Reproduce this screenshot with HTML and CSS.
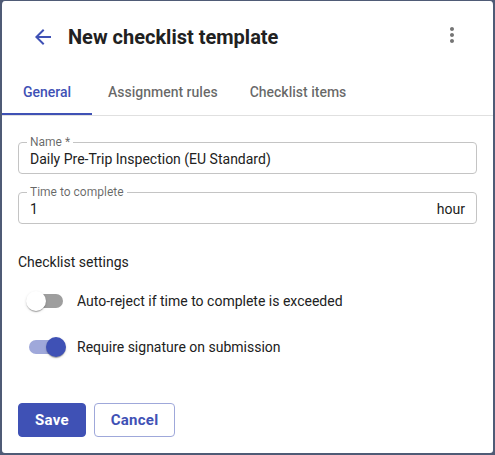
FILE: index.html
```html
<!DOCTYPE html>
<html lang="en">
<head>
<meta charset="utf-8">
<title>New checklist template</title>
<link rel="stylesheet" href="styles.css">
</head>
<body>
<div class="card">
  <header class="header">
    <svg class="icon back" viewBox="0 0 24 24" width="24" height="24"><path d="M20 11H7.83l5.59-5.59L12 4l-8 8 8 8 1.41-1.41L7.83 13H20v-2z"/></svg>
    <h1 class="title">New checklist template</h1>
    <svg class="icon more" viewBox="0 0 24 24" width="24" height="24"><path d="M12 8c1.1 0 2-.9 2-2s-.9-2-2-2-2 .9-2 2 .9 2 2 2zm0 2c-1.1 0-2 .9-2 2s.9 2 2 2 2-.9 2-2-.9-2-2-2zm0 6c-1.1 0-2 .9-2 2s.9 2 2 2 2-.9 2-2-.9-2-2-2z"/></svg>
  </header>
  <nav class="tabs">
    <div class="tab active">General</div>
    <div class="tab">Assignment rules</div>
    <div class="tab">Checklist items</div>
  </nav>
  <form class="form">
    <fieldset class="field">
      <legend class="field-label">Name *</legend>
      <div class="field-value">Daily Pre-Trip Inspection (EU Standard)</div>
    </fieldset>
    <fieldset class="field">
      <legend class="field-label">Time to complete</legend>
      <div class="field-value split"><span>1</span><span>hour</span></div>
    </fieldset>
    <div class="section-title">Checklist settings</div>
    <div class="switch-row">
      <span class="switch"><span class="track"></span><span class="thumb"></span></span>
      <span class="switch-label">Auto-reject if time to complete is exceeded</span>
    </div>
    <div class="switch-row">
      <span class="switch on"><span class="track"></span><span class="thumb"></span></span>
      <span class="switch-label">Require signature on submission</span>
    </div>
  </form>
  <div class="actions">
    <button class="btn primary" type="button">Save</button>
    <button class="btn outlined" type="button">Cancel</button>
  </div>
</div>
</body>
</html>
```

FILE: styles.css
```css
* { box-sizing: border-box; }
html, body { margin: 0; padding: 0; background: #4f5b76; }
body { font-family: Roboto, "Noto Sans", "Liberation Sans", sans-serif; color: #212121; }

.card {
  width: 495px;
  height: 455px;
  background: #fff;
  border: 2px solid #4f5b76;
  border-top-width: 1px;
  border-radius: 5px;
  display: flex;
  flex-direction: column;
}

.header {
  display: flex;
  align-items: center;
  height: 66px;
  padding: 12px 29px 6px 29px;
}
.icon { flex: none; }
.back { fill: #3f51b5; }
.more { fill: #757575; margin-left: auto; margin-top: -4px; }
.title {
  margin: 0 0 0 13px;
  font-size: 20px;
  font-weight: 700;
  line-height: 24px;
  color: #212121;
}

.tabs {
  display: flex;
  height: 49px;
  border-bottom: 1px solid #e0e0e0;
}
.tab {
  min-width: 90px;
  padding: 4px 16px 0 16px;
  display: flex;
  align-items: center;
  justify-content: center;
  font-size: 14px;
  font-weight: 500;
  color: rgba(0,0,0,0.6);
  border-bottom: 2px solid transparent;
}
.tab.active { color: #3f51b5; border-bottom-color: #3f51b5; }

.form {
  padding: 20px 16px 0 16px;
  display: flex;
  flex-direction: column;
}
.field {
  margin: 0;
  min-inline-size: 0;
  border: 1px solid #c4c4c4;
  border-radius: 4px;
  padding: 0 11px 5px 11px;
}
.field + .field { margin-top: 12px; }
.field-label {
  margin-left: -3px;
  padding: 0 3px;
  font-size: 12px;
  line-height: 12px;
  color: rgba(0,0,0,0.6);
}
.field-value {
  font-size: 14px;
  line-height: 20px;
  color: #212121;
  padding-top: 1px;
  margin-bottom: -1px;
}
.split { display: flex; justify-content: space-between; }

.section-title {
  margin-top: 28px;
  font-size: 14px;
  line-height: 20px;
  color: #212121;
}

.switch-row {
  display: flex;
  align-items: center;
  margin-left: -1px;
  height: 38px;
}
.section-title + .switch-row { margin-top: 10px; }
.switch-row + .switch-row { margin-top: 8px; }
.switch {
  position: relative;
  width: 58px;
  height: 38px;
  padding: 12px;
  flex: none;
}
.track {
  display: block;
  width: 34px;
  height: 14px;
  border-radius: 7px;
  background: #9e9e9e;
}
.thumb {
  position: absolute;
  top: 9px;
  left: 9px;
  width: 20px;
  height: 20px;
  border-radius: 50%;
  background: #fff;
  box-shadow: 0 2px 1px -1px rgba(0,0,0,0.2), 0 1px 1px 0 rgba(0,0,0,0.14), 0 1px 3px 0 rgba(0,0,0,0.12);
}
.switch.on .track { background: #9fa8da; }
.switch.on .thumb { left: 29px; background: #3f51b5; }
.switch-label {
  margin-left: 2px;
  font-size: 14px;
  color: #212121;
}

.actions {
  margin-top: auto;
  padding: 0 16px 16px 16px;
  display: flex;
  gap: 8px;
}
.btn {
  height: 34px;
  padding: 0 16px;
  border-radius: 4px;
  font-family: inherit;
  font-size: 15px;
  font-weight: 700;
  letter-spacing: 0.25px;
  cursor: pointer;
}
.primary { background: #3f51b5; color: #fff; border: 1px solid #3f51b5; }
.outlined { background: #fff; color: #3f51b5; border: 1px solid #9fa8da; }
```
